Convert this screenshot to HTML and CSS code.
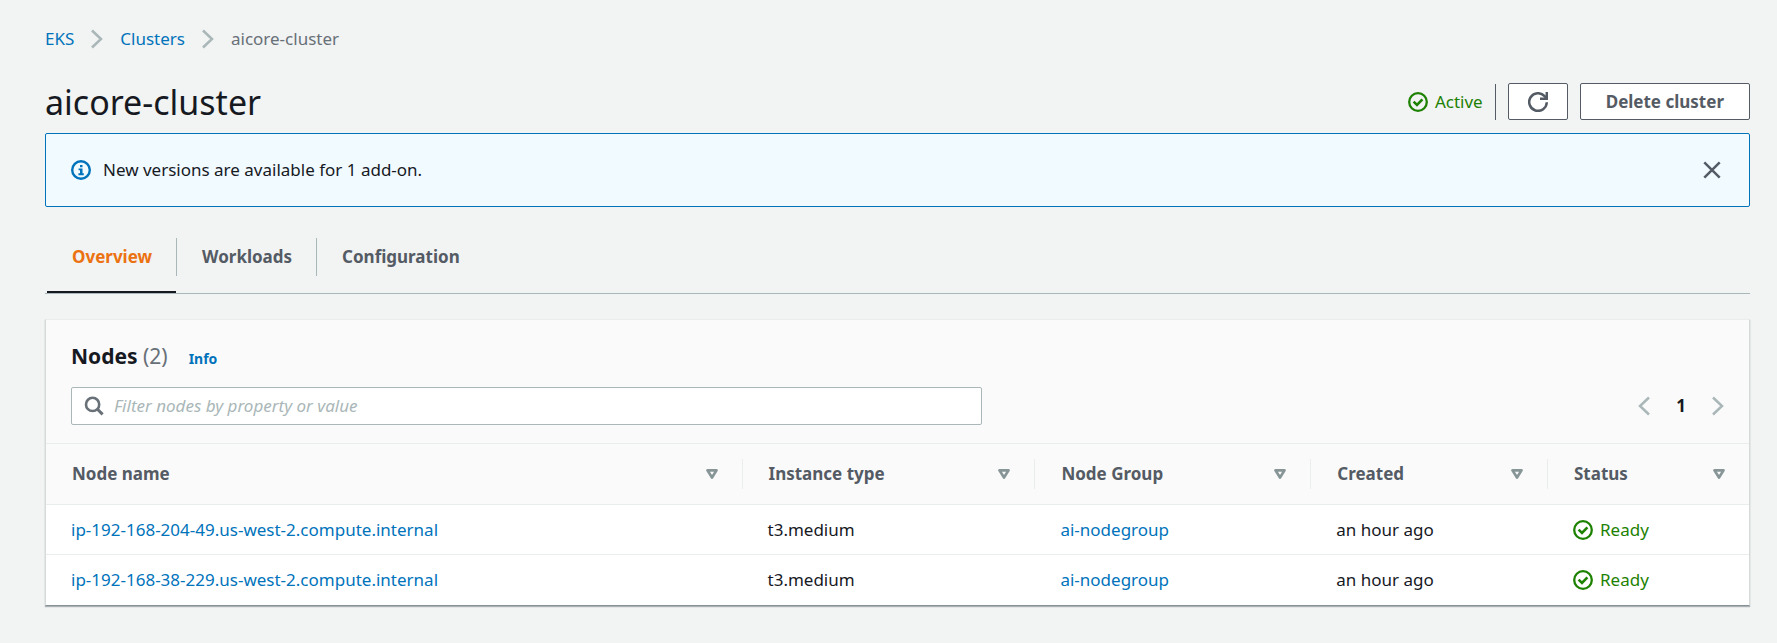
FILE: index.html
```html
<!DOCTYPE html>
<html lang="en">
<head>
<meta charset="utf-8">
<title>aicore-cluster</title>
<link rel="stylesheet" href="styles.css">
</head>
<body>
<svg class="sprite" aria-hidden="true">
  <symbol id="chevron" viewBox="0 0 20 20"><path d="M5 1.5 14 10 5 18.5" fill="none" stroke="currentColor" stroke-width="2.5"/></symbol>
  <symbol id="check" viewBox="0 0 20 20"><g fill="none" stroke="currentColor" stroke-width="2.3"><circle cx="10" cy="10" r="8.8"/><path d="M5.6 9.6 9 12.9 14.4 7.4" stroke-width="2.6"/></g></symbol>
  <symbol id="sort" viewBox="0 0 12 10"><path d="M1.5 1.4h9L6 8.5z" fill="none" stroke="currentColor" stroke-width="2.7" stroke-linejoin="round"/></symbol>
</svg>
<main class="page">
  <nav class="breadcrumbs" aria-label="Breadcrumbs">
    <a href="#">EKS</a>
    <svg class="icon"><use href="#chevron"/></svg>
    <a href="#">Clusters</a>
    <svg class="icon"><use href="#chevron"/></svg>
    <span>aicore-cluster</span>
  </nav>
  <header class="page-header">
    <h1>aicore-cluster</h1>
    <div class="actions">
      <span class="status status-active"><svg class="icon"><use href="#check"/></svg>Active</span>
      <button class="button button-icon" type="button" aria-label="Refresh">
        <svg class="icon" viewBox="0 0 20 20" fill="none" stroke="currentColor" stroke-width="2.5"><path d="M18.8 10.2A8.8 8.8 0 1 1 16.6 4.2L18 5.8"/><path d="M18.8 0v6.8H12" /></svg>
      </button>
      <button class="button" type="button">Delete cluster</button>
    </div>
  </header>
  <section class="alert">
    <svg class="icon" viewBox="0 0 20 20" fill="none" stroke="currentColor"><circle cx="10" cy="10" r="8.8" stroke-width="2.4"/><path d="M9 5h2.5v2.2H9zM7.6 8.4h3.9v4.9h1.3v2H7.4v-2H9v-3H7.6z" fill="currentColor" stroke="none"/></svg>
    <p>New versions are available for 1 add-on.</p>
    <button class="plain" type="button" aria-label="Dismiss">
      <svg class="icon" viewBox="0 0 20 20" fill="none" stroke="currentColor" stroke-width="2.5"><path d="M2.3 2.3 17.7 17.7M17.7 2.3 2.3 17.7"/></svg>
    </button>
  </section>
  <div class="tabs" role="tablist">
    <button class="tab tab-selected" type="button" role="tab" aria-selected="true"><span>Overview</span></button>
    <button class="tab" type="button" role="tab" aria-selected="false"><span>Workloads</span></button>
    <button class="tab" type="button" role="tab" aria-selected="false"><span>Configuration</span></button>
  </div>
  <section class="panel">
    <div class="panel-header">
      <div class="panel-title">
        <h2>Nodes <span>(2)</span></h2>
        <a href="#">Info</a>
      </div>
      <div class="toolbar">
        <label class="search">
          <svg class="icon" viewBox="0 0 20 20" fill="none" stroke="currentColor" stroke-width="2.6"><circle cx="8.6" cy="8.4" r="6.6"/><path d="M13.2 13l5.4 5.4" stroke-width="3"/></svg>
          <input type="text" placeholder="Filter nodes by property or value" aria-label="Filter nodes">
        </label>
        <nav class="pagination" aria-label="Pages">
          <button class="plain" type="button" aria-label="Previous page"><svg class="icon flip"><use href="#chevron"/></svg></button>
          <button class="plain current" type="button">1</button>
          <button class="plain" type="button" aria-label="Next page"><svg class="icon"><use href="#chevron"/></svg></button>
        </nav>
      </div>
    </div>
    <table class="nodes">
      <colgroup><col class="col-name"><col class="col-type"><col class="col-group"><col class="col-created"><col></colgroup>
      <thead>
        <tr>
          <th scope="col"><div>Node name<svg class="sort"><use href="#sort"/></svg></div></th>
          <th scope="col"><div>Instance type<svg class="sort"><use href="#sort"/></svg></div></th>
          <th scope="col"><div>Node Group<svg class="sort"><use href="#sort"/></svg></div></th>
          <th scope="col"><div>Created<svg class="sort"><use href="#sort"/></svg></div></th>
          <th scope="col"><div>Status<svg class="sort"><use href="#sort"/></svg></div></th>
        </tr>
      </thead>
      <tbody>
        <tr>
          <td><a href="#">ip-192-168-204-49.us-west-2.compute.internal</a></td>
          <td>t3.medium</td>
          <td><a href="#">ai-nodegroup</a></td>
          <td>an hour ago</td>
          <td><span class="status"><svg class="icon"><use href="#check"/></svg>Ready</span></td>
        </tr>
        <tr>
          <td><a href="#">ip-192-168-38-229.us-west-2.compute.internal</a></td>
          <td>t3.medium</td>
          <td><a href="#">ai-nodegroup</a></td>
          <td>an hour ago</td>
          <td><span class="status"><svg class="icon"><use href="#check"/></svg>Ready</span></td>
        </tr>
      </tbody>
    </table>
  </section>
</main>
</body>
</html>
```
FILE: styles.css
```css
* { box-sizing: border-box; }

body {
  margin: 0;
  background: #f2f3f3;
  color: #16191f;
  font: 17px/28px "Noto Sans", "Open Sans", sans-serif;
}

h1, h2, p { margin: 0; }
a { color: #0073bb; text-decoration: none; }
button, input { font: inherit; }

.sprite { position: absolute; width: 0; height: 0; }
.icon { display: block; flex: none; width: 20px; height: 20px; }
.flip { transform: scaleX(-1); }

.page { padding: 25px 27px 36px 45px; }

.breadcrumbs {
  display: flex;
  align-items: center;
  gap: 13px;
  color: #687078;
}
.breadcrumbs .icon { color: #aab7b8; }

.page-header {
  display: flex;
  align-items: flex-start;
  justify-content: space-between;
  margin-top: 26px;
}
.page-header h1 { font-size: 34px; line-height: 46px; font-weight: 400; }

.actions { display: flex; align-items: center; gap: 12px; margin-top: 4px; }

.status {
  display: flex;
  align-items: center;
  gap: 7px;
  color: #1d8102;
}
.status-active {
  height: 36px;
  padding-right: 12px;
  border-right: 1px solid #545b64;
}

.button {
  height: 37px;
  padding: 0 25px;
  border: 1px solid #545b64;
  border-radius: 2px;
  background: #fff;
  color: #545b64;
  font-weight: 700;
}
.button-icon { padding: 0 19px; }

.plain {
  padding: 0;
  border: 0;
  background: none;
  color: #545b64;
}

.alert {
  display: flex;
  align-items: center;
  gap: 12px;
  margin-top: 8px;
  padding: 22px 27px 22px 25px;
  border: 1px solid #0073bb;
  border-radius: 2px;
  background: #f1faff;
}
.alert > .icon { color: #0073bb; }
.alert .plain { margin-left: auto; }

.tabs {
  display: flex;
  margin-top: 31px;
  padding-left: 2px;
  border-bottom: 1px solid #aab7b8;
}
.tab {
  padding: 0 0 15px;
  border: 0;
  border-bottom: 2px solid transparent;
  background: none;
  color: #545b64;
  font-weight: 700;
}
.tab span {
  display: block;
  padding: 0 24px 0 25px;
  line-height: 38px;
}
.tab + .tab span { border-left: 1px solid #aab7b8; }
.tab-selected { border-bottom-color: #16191f; color: #ec7211; }

.panel {
  margin-top: 25px;
  border: 1px solid #d5dbdb;
  border-top-color: #eaeded;
  border-bottom-color: #879196;
  background: #fff;
  box-shadow: 0 1px 1px rgba(0, 28, 36, 0.3);
}
.panel-header {
  padding: 20px 21px 18px 25px;
  background: #fafafa;
}
.panel-title { display: flex; align-items: baseline; gap: 21px; }
.panel-title h2 { font-size: 21px; line-height: 32px; }
.panel-title h2 span { color: #687078; font-weight: 400; }
.panel-title a { font-size: 14px; font-weight: 700; }

.toolbar {
  display: flex;
  align-items: center;
  justify-content: space-between;
  margin-top: 14px;
}
.search {
  display: flex;
  align-items: center;
  gap: 10px;
  width: 55%;
  height: 38px;
  padding: 0 12px;
  border: 1px solid #aab7b8;
  border-radius: 2px;
  background: #fff;
  color: #687078;
}
.search input {
  flex: 1;
  min-width: 0;
  padding: 0;
  border: 0;
  outline: 0;
  background: none;
  color: #16191f;
}
.search input::placeholder { color: #aab7b8; font-style: italic; opacity: 1; }

.pagination { display: flex; align-items: center; gap: 22px; }
.pagination .plain { color: #aab7b8; }
.pagination .current { color: #16191f; font-weight: 700; }

.nodes {
  width: 100%;
  border-collapse: collapse;
  table-layout: fixed;
}
.col-name { width: 40.9%; }
.col-type { width: 17.2%; }
.col-group { width: 16.2%; }
.col-created { width: 13.9%; }

.nodes th {
  padding: 15px 0;
  border-top: 1px solid #eaeded;
  background: #fafafa;
  color: #545b64;
  text-align: left;
}
.nodes th div {
  display: flex;
  align-items: center;
  justify-content: space-between;
  padding: 0 24px 0 26px;
  border-right: 1px solid #eaeded;
  line-height: 30px;
}
.nodes th:last-child div { border-right: 0; }
.sort { width: 12px; height: 10px; color: #879596; }

.nodes td {
  height: 50px;
  padding: 0 25px;
  border-top: 1px solid #eaeded;
}
```
